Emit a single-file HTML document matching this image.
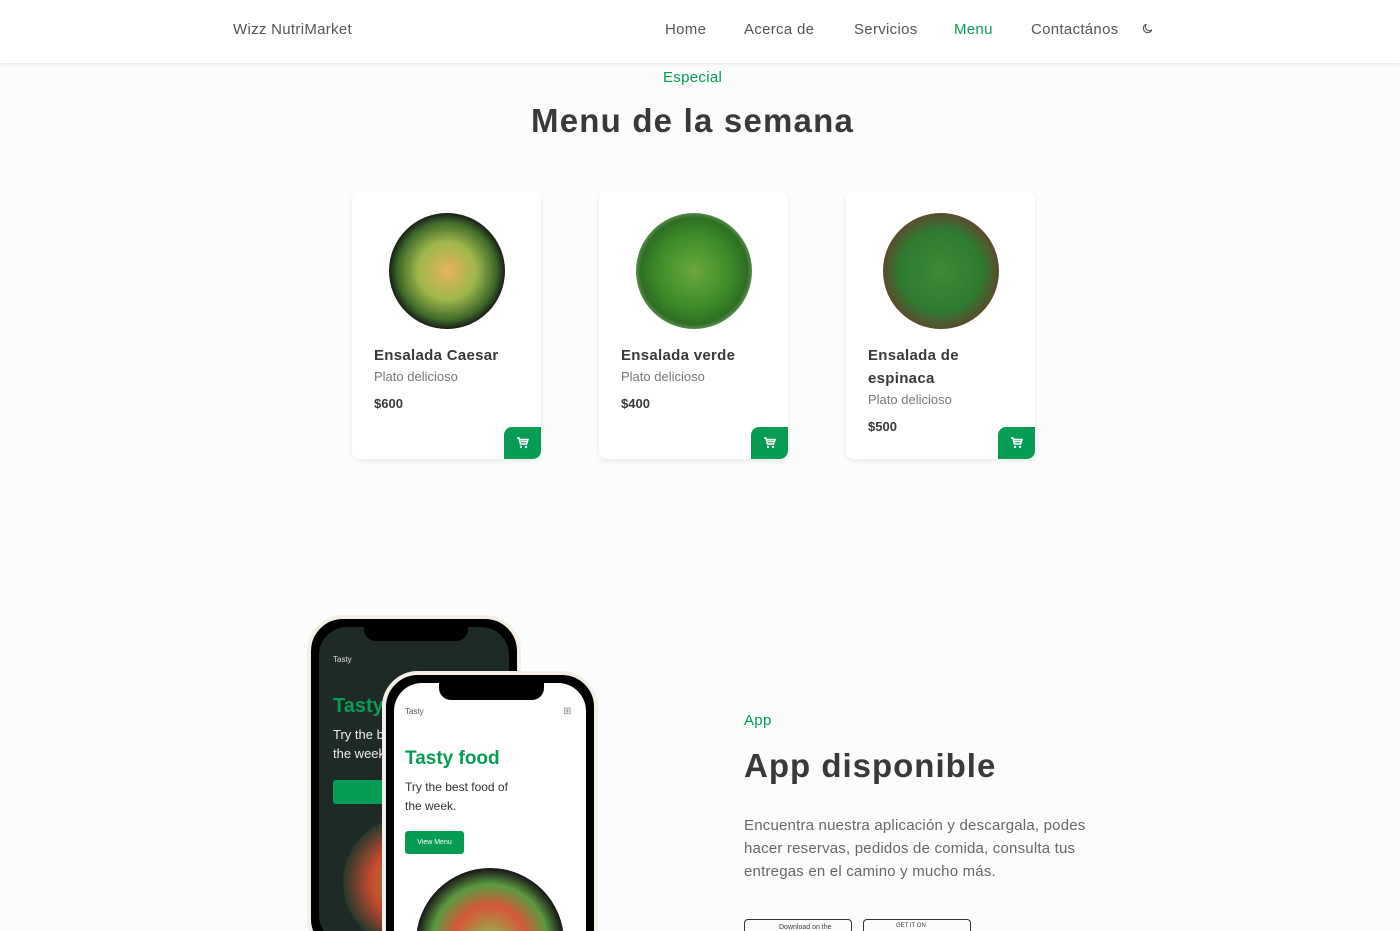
<!DOCTYPE html>
<html style="overflow:hidden;height:931px"><head><meta charset="utf-8"><style>
*{margin:0;padding:0;box-sizing:border-box}
html,body{width:1400px;height:931px;overflow:hidden}
body{background:#fbfdfc;font-family:"Liberation Sans",sans-serif;color:#393939;position:relative}
.hdr{position:absolute;left:0;top:0;width:1400px;height:63px;background:#fff;box-shadow:0 1px 4px rgba(0,0,0,.1)}
.abs{position:absolute;white-space:nowrap}
.nav{font-size:15px;color:#555;top:21px;letter-spacing:.3px}
.card{position:absolute;top:191px;width:189px;height:268px;background:#fff;border-radius:8px;box-shadow:0 2px 6px rgba(0,0,0,.08);overflow:hidden}
.card .t{position:absolute;left:22px;top:153px;font-size:15px;font-weight:bold;color:#393939;line-height:23px;width:130px;white-space:normal;letter-spacing:.3px}
.card .s{position:absolute;left:22px;font-size:13px;color:#777}
.card .p{position:absolute;left:22px;font-size:13px;font-weight:bold;color:#393939}
.cart{position:absolute;right:0;bottom:0;width:37px;height:32px;background:#069c54;border-radius:8px 0 8px 0;display:flex;align-items:center;justify-content:center}
.plate{position:absolute;left:37px;top:22px;width:116px;height:116px;border-radius:50%}
.g{color:#069c54}
.phone{position:absolute;border-radius:36px;background:#000;border:4px solid #f4efe6}
</style></head><body>
<div class="hdr"></div>
<div class="abs" style="left:233px;top:21px;font-size:15px;color:#555;letter-spacing:.3px">Wizz NutriMarket</div>
<div class="abs nav" style="left:665px">Home</div>
<div class="abs nav" style="left:744px">Acerca de</div>
<div class="abs nav" style="left:854px">Servicios</div>
<div class="abs nav g" style="left:954px">Menu</div>
<div class="abs nav" style="left:1031px">Contactános</div>
<svg class="abs" style="left:1141px;top:22px" width="13" height="13" viewBox="0 0 24 24"><path d="M20 14A8 8 0 1 1 10 4a6.5 6.5 0 0 0 10 10z" fill="none" stroke="#555" stroke-width="2"/></svg>
<div class="abs g" style="left:663px;top:69px;font-size:15px;letter-spacing:.3px">Especial</div>
<div class="abs" style="left:531px;top:102px;font-size:33px;font-weight:bold;color:#393939;letter-spacing:1.2px">Menu de la semana</div>

<div class="card" style="left:352px"><div class="plate" style="background:radial-gradient(circle,#e9b25a 0,#9fb84a 35%,#3d6a2a 60%,#151515 72%,#111 100%)"></div><div class="t">Ensalada Caesar</div><div class="s" style="top:178px">Plato delicioso</div><div class="p" style="top:205px">$600</div><div class="cart"><svg width="13" height="12" viewBox="0 0 13 12"><path d="M1 1h2l1.5 6h6l1.5-4.5H4M5 4.5h6" fill="none" stroke="#fff" stroke-width="1.6"/><circle cx="5" cy="10" r="1.2" fill="#fff"/><circle cx="10" cy="10" r="1.2" fill="#fff"/></svg></div></div>
<div class="card" style="left:599px"><div class="plate" style="background:radial-gradient(circle,#6aa83a 0,#3f8a2a 45%,#2e6e22 65%,#dcdcdc 88%,#fff 100%)"></div><div class="t">Ensalada verde</div><div class="s" style="top:178px">Plato delicioso</div><div class="p" style="top:205px">$400</div><div class="cart"><svg width="13" height="12" viewBox="0 0 13 12"><path d="M1 1h2l1.5 6h6l1.5-4.5H4M5 4.5h6" fill="none" stroke="#fff" stroke-width="1.6"/><circle cx="5" cy="10" r="1.2" fill="#fff"/><circle cx="10" cy="10" r="1.2" fill="#fff"/></svg></div></div>
<div class="card" style="left:846px"><div class="plate" style="background:radial-gradient(circle,#3d8a3a 0,#2e7a30 50%,#6a3a2a 78%,#ddd 90%,#fff 100%)"></div><div class="t">Ensalada de espinaca</div><div class="s" style="top:201px">Plato delicioso</div><div class="p" style="top:228px">$500</div><div class="cart"><svg width="13" height="12" viewBox="0 0 13 12"><path d="M1 1h2l1.5 6h6l1.5-4.5H4M5 4.5h6" fill="none" stroke="#fff" stroke-width="1.6"/><circle cx="5" cy="10" r="1.2" fill="#fff"/><circle cx="10" cy="10" r="1.2" fill="#fff"/></svg></div></div>

<div class="phone" style="left:307px;top:615px;width:214px;height:340px;padding:8px">
 <div style="width:100%;height:100%;background:#1e2a25;border-radius:28px;position:relative;overflow:hidden">
  <div style="position:absolute;left:45px;top:0;width:104px;height:14px;background:#000;border-radius:0 0 12px 12px"></div>
  <div class="abs" style="left:14px;top:28px;font-size:8px;color:#ddd">Tasty</div>
  <div class="abs" style="left:14px;top:68px;font-size:20px;font-weight:bold;color:#069c54">Tasty food</div>
  <div class="abs" style="left:14px;top:98px;font-size:13px;color:#eee;line-height:19px">Try the best food of<br>the week.</div>
  <div class="abs" style="left:14px;top:153px;width:60px;height:24px;background:#069c54;border-radius:3px"></div>
  <div style="position:absolute;left:24px;top:190px;width:130px;height:130px;border-radius:50%;background:radial-gradient(circle,#7fb44a 0,#c74a30 40%,#2b3a2b 70%,#111 100%)"></div>
 </div></div>
<div class="phone" style="left:382px;top:671px;width:216px;height:300px;padding:8px">
 <div style="width:100%;height:100%;background:#fff;border-radius:28px;position:relative;overflow:hidden">
  <div style="position:absolute;left:45px;top:0;width:105px;height:17px;background:#000;border-radius:0 0 12px 12px"></div>
  <div class="abs" style="left:11px;top:24px;font-size:8px;color:#555">Tasty</div>
  <div class="abs" style="left:169px;top:23px;font-size:10px;color:#888">⊞</div>
  <div class="abs" style="left:11px;top:65px;font-size:19px;font-weight:bold;color:#069c54">Tasty food</div>
  <div class="abs" style="left:11px;top:95px;font-size:12px;color:#333;line-height:19px">Try the best food of<br>the week.</div>
  <div class="abs" style="left:11px;top:148px;width:59px;height:23px;background:#069c54;border-radius:3px;color:#fff;font-size:7px;line-height:23px;text-align:center">View Menu</div>
  <div style="position:absolute;left:22px;top:185px;width:148px;height:148px;border-radius:50%;background:radial-gradient(circle,#8cc04a 0,#d5573a 35%,#5a9a40 55%,#1a1a1a 70%)"></div>
 </div></div>

<div class="abs g" style="left:744px;top:712px;font-size:15px;letter-spacing:.3px">App</div>
<div class="abs" style="left:744px;top:747px;font-size:33px;font-weight:bold;color:#393939;letter-spacing:1px">App disponible</div>
<div class="abs" style="left:744px;top:814px;font-size:15px;color:#666;line-height:23px;white-space:normal;width:370px;letter-spacing:.2px">Encuentra nuestra aplicación y descargala, podes hacer reservas, pedidos de comida, consulta tus entregas en el camino y mucho más.</div>
<div class="abs" style="left:744px;top:919px;width:108px;height:20px;border:1px solid #333;border-radius:4px;font-size:7px;padding:4px 0 0 34px">Download on the</div>
<div class="abs" style="left:863px;top:919px;width:108px;height:20px;border:1px solid #333;border-radius:4px;font-size:6px;padding:3px 0 0 32px">GET IT ON</div>
</body></html>
